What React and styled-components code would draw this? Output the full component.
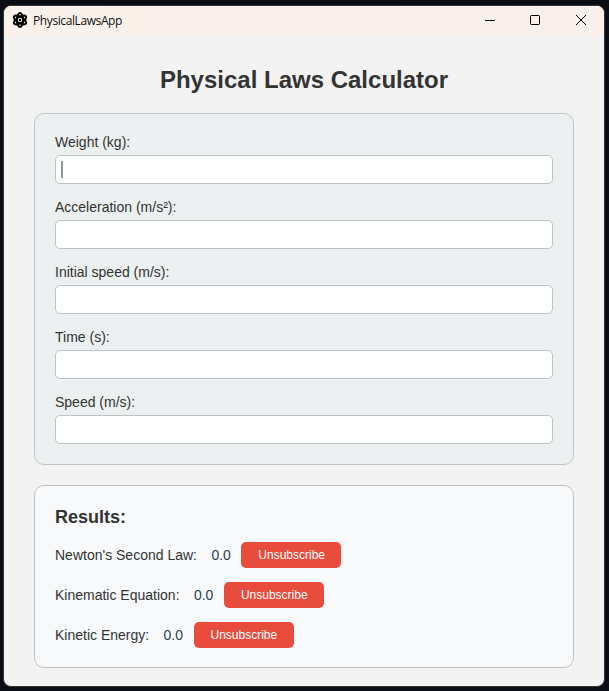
import React from "react";
import styled, { createGlobalStyle } from "styled-components";

const GlobalStyle = createGlobalStyle`
  * { box-sizing: border-box; }
  body {
    margin: 0;
    background: #0a0d14;
    font-family: "Liberation Sans", Arial, sans-serif;
    color: #333;
    overflow: hidden;
  }
`;

const Desktop = styled.div`
  height: 691px;
  padding: 5px 4px 4px 3px;
`;

const Window = styled.main`
  width: 602px;
  height: 682px;
  border: 1px solid #37373b;
  border-radius: 8px;
  background: #f3f3f3;
  overflow: hidden;
`;

const TitleBar = styled.header`
  height: 30px;
  display: flex;
  align-items: center;
  padding: 0 0 2px 8px;
  background: linear-gradient(90deg, #faf1ea, #f9f0ed);
  color: #111;
`;

const AppName = styled.span`
  flex: 1;
  margin-left: 5px;
  padding-top: 1px;
  font: 12px "Open Sans", "Noto Sans", sans-serif;
  letter-spacing: -0.4px;
`;

const WindowButton = styled.div`
  width: ${(p) => p.$width}px;
  height: 28px;
  display: grid;
  place-items: center;
`;

const Content = styled.div`
  display: flex;
  flex-direction: column;
  padding: 0 30px;
`;

const Heading = styled.h1`
  margin: 30px 0 19px;
  font-size: 24px;
  line-height: 28px;
  text-align: center;
`;

const Panel = styled.section`
  height: ${(p) => p.$height}px;
  margin-bottom: 20px;
  padding: 20px;
  background: ${(p) => p.$fill};
  border: 1px solid #bdc3c7;
  border-radius: 10px;
`;

const Form = styled.div`
  display: flex;
  flex-direction: column;
  gap: 20px;
`;

const Field = styled.label`
  display: block;
  height: 45px;
  font-size: 14px;
  line-height: 16px;
`;

const Input = styled.div`
  height: 29px;
  margin-top: 5px;
  padding: 5px;
  background: #fff;
  border: 1px solid #bdc3c7;
  border-radius: 5px;
`;

const Caret = styled.div`
  width: 2px;
  height: 17px;
  background: #969696;
`;

const ResultsTitle = styled.h2`
  margin: 0 0 14px;
  padding-top: 1px;
  font-size: 18px;
  line-height: 21px;
`;

const ResultRow = styled.div`
  display: flex;
  align-items: center;
  height: 26px;
  margin-bottom: 14px;
  font-size: 14px;
`;

const Value = styled.span`
  margin: 0 10.6px 0 14.4px;
  color: #2c3e50;
`;

const Button = styled.button`
  width: 100px;
  height: 26px;
  padding: 0 0 0 0.5px;
  border: 0;
  border-radius: 5px;
  background: #e74c3c;
  color: #fff;
  font: 12px "Liberation Sans", Arial, sans-serif;
`;

const fields = ["Weight (kg):", "Acceleration (m/s²):", "Initial speed (m/s):", "Time (s):", "Speed (m/s):"];
const results = ["Newton's Second Law:", "Kinematic Equation:", "Kinetic Energy:"];

function AtomIcon() {
  return (
    <svg width="16" height="16" viewBox="0 0 16 16" fill="none" stroke="#000" strokeWidth="2">
      <ellipse cx="8" cy="8" rx="3.1" ry="6.9" />
      <ellipse cx="8" cy="8" rx="3.1" ry="6.9" transform="rotate(60 8 8)" />
      <ellipse cx="8" cy="8" rx="3.1" ry="6.9" transform="rotate(120 8 8)" />
      <circle cx="8" cy="8" r="1.7" fill="#000" stroke="#faf1ea" strokeWidth="0.9" />
    </svg>
  );
}

export default function App() {
  return (
    <Desktop>
      <GlobalStyle />
      <Window>
        <TitleBar>
          <AtomIcon />
          <AppName>PhysicalLawsApp</AppName>
          <WindowButton $width={46}>
            <svg width="12" height="12" stroke="#000" fill="none"><path d="M1 6.5h10" /></svg>
          </WindowButton>
          <WindowButton $width={44}>
            <svg width="12" height="12" stroke="#000" fill="none"><rect x="1.5" y="1.5" width="9" height="9" rx="0.8" /></svg>
          </WindowButton>
          <WindowButton $width={47}>
            <svg width="12" height="12" stroke="#000" fill="none"><path d="M1 1l10 10M11 1L1 11" /></svg>
          </WindowButton>
        </TitleBar>
        <Content>
          <Heading>Physical Laws Calculator</Heading>
          <Panel $height={352} $fill="#ecf0f1">
            <Form>
              {fields.map((name, i) => (
                <Field key={name}>
                  {name}
                  <Input>{i === 0 && <Caret />}</Input>
                </Field>
              ))}
            </Form>
          </Panel>
          <Panel $height={183} $fill="#f8f9fb">
            <ResultsTitle>Results:</ResultsTitle>
            {results.map((name) => (
              <ResultRow key={name}>
                <span>{name}</span>
                <Value>0.0</Value>
                <Button>Unsubscribe</Button>
              </ResultRow>
            ))}
          </Panel>
        </Content>
      </Window>
    </Desktop>
  );
}
